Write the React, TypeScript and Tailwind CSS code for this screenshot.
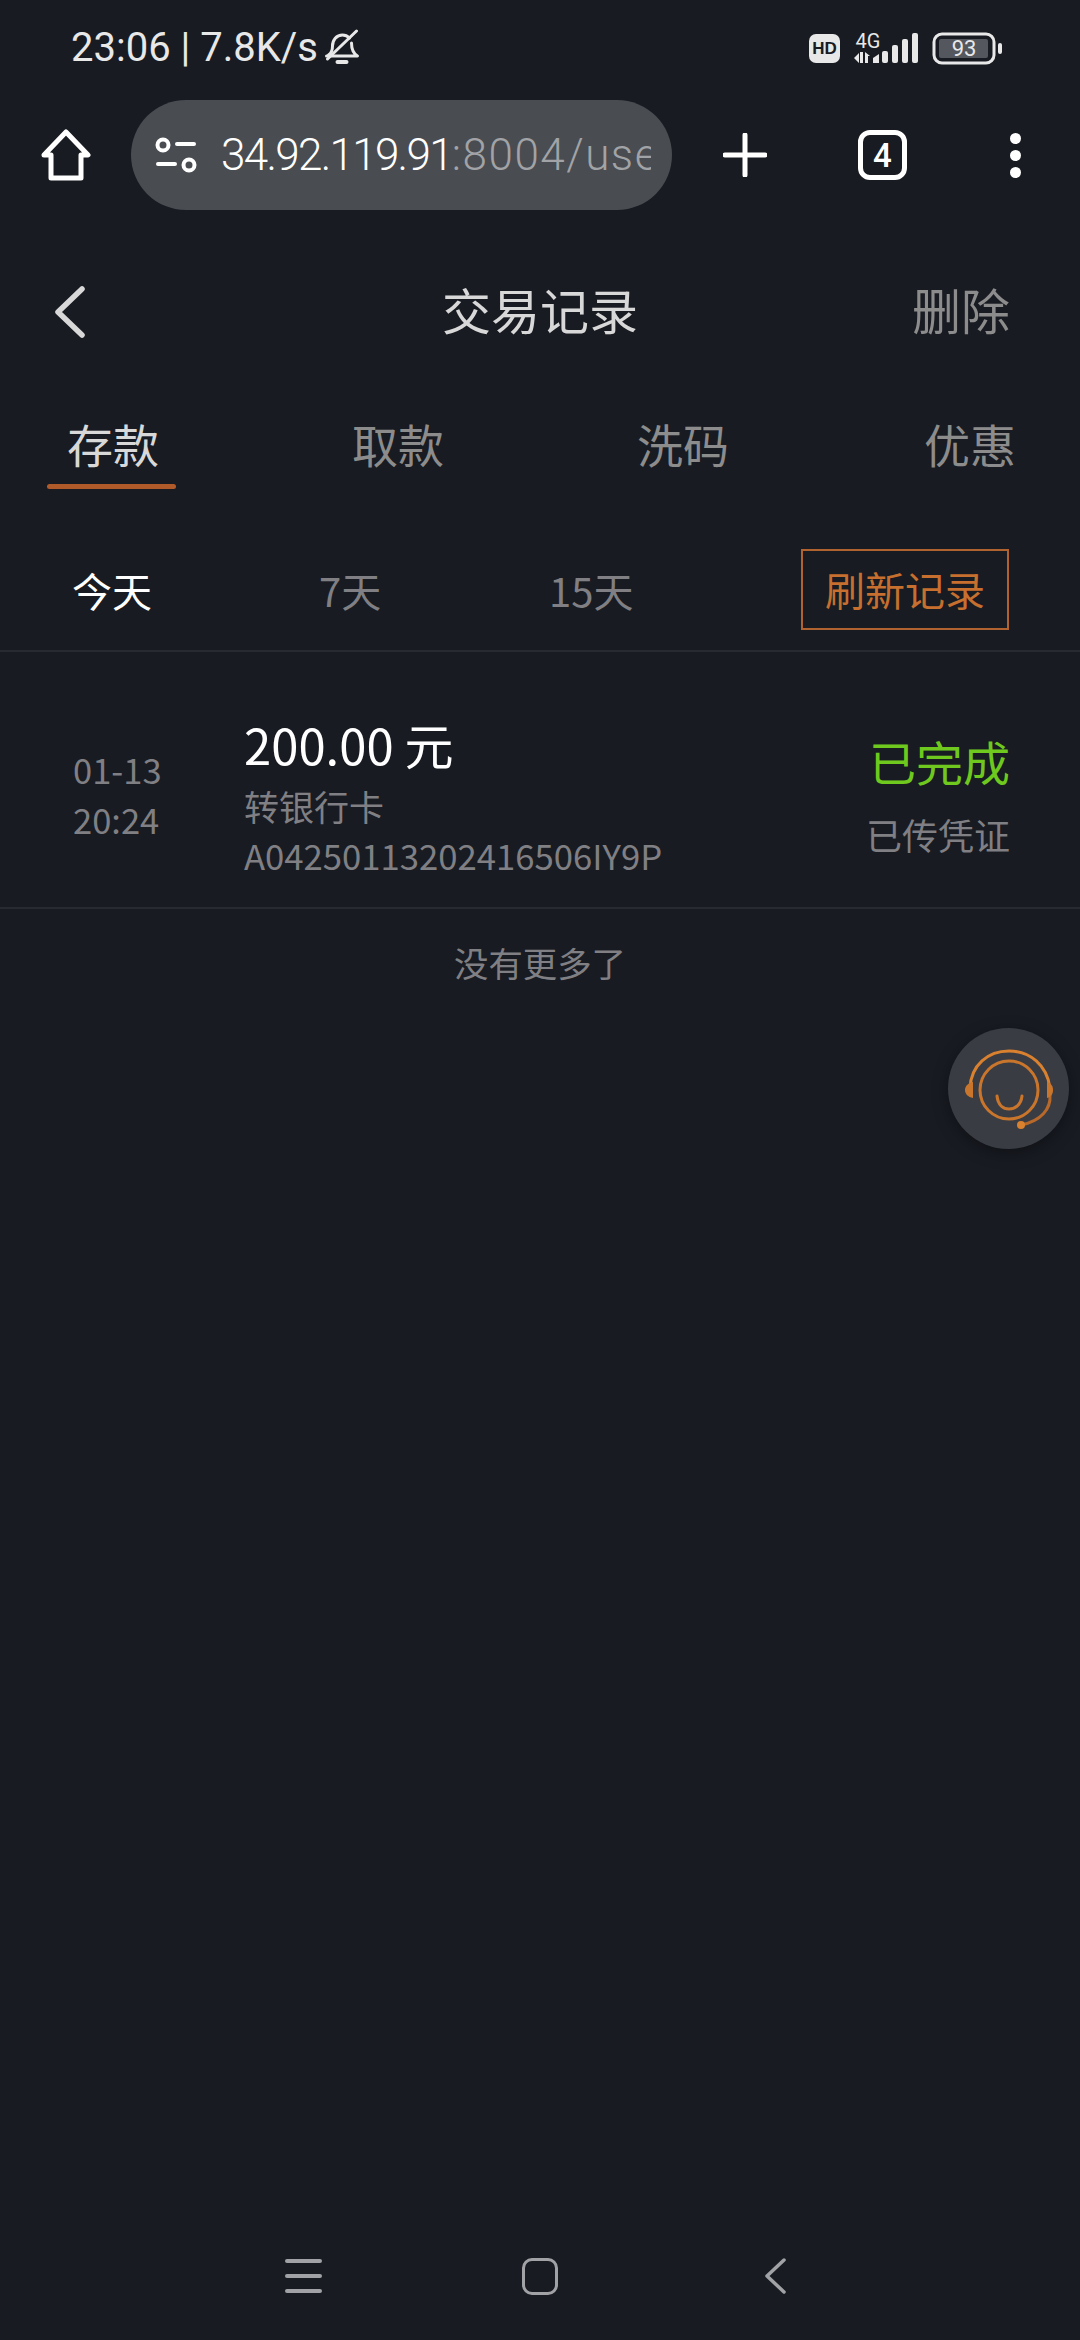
const cjk = "font-['Noto_Sans_CJK_SC','Noto_Sans',sans-serif]";

function BellOff() {
  return (
    <svg width="37" height="38" viewBox="0 0 36 38" fill="none" stroke="#e8e8e8" strokeWidth="3" strokeLinecap="round" strokeLinejoin="round">
      <path d="M5 26c3-2 4-5 4-9 0-6 4-11 10-11 3 0 5 1 7 3" />
      <path d="M28 14c0 6 1 10 6 13H3" />
      <path d="M33 2 4 30" />
      <path d="M14 33h9" strokeWidth="4" />
    </svg>
  );
}

function StatusIcons() {
  return (
    <svg width="194" height="34" viewBox="0 0 194 34" className="text-[#e8e8e8]">
      <rect x="1" y="3" width="31" height="29" rx="7" fill="currentColor" />
      <text x="16.5" y="23" textAnchor="middle" fontFamily="Liberation Sans" fontWeight="700" fontSize="17" fill="#181b22">HD</text>
      <text x="60" y="17" textAnchor="middle" fontFamily="Roboto" fontSize="20" fill="currentColor">4G</text>
      <path d="M46 27l5-5v10zM52 21h3v11h-3zM57 21l5 4h-2v7h-3z" fill="currentColor" />
      <path d="M65 27l6-4v9h-6z" fill="currentColor" />
      <rect x="74" y="20" width="6" height="12" rx="2" fill="currentColor" />
      <rect x="84" y="14" width="6" height="18" rx="2" fill="currentColor" />
      <rect x="94" y="8" width="6" height="24" rx="2" fill="currentColor" />
      <rect x="104" y="2" width="6" height="30" rx="2" fill="currentColor" />
      <rect x="126" y="3" width="60" height="29" rx="8" fill="none" stroke="currentColor" strokeWidth="3" />
      <rect x="131" y="8" width="49" height="19" rx="2" fill="#54575d" />
      <text x="156" y="25" textAnchor="middle" fontFamily="Roboto" fontSize="22" fill="currentColor">93</text>
      <rect x="190" y="12" width="4" height="11" rx="2" fill="currentColor" />
    </svg>
  );
}

function HomeIcon() {
  return (
    <svg width="50" height="52" viewBox="0 0 50 52" fill="none" stroke="#fff" strokeWidth="5" strokeLinejoin="round" strokeLinecap="round">
      <path d="M3 26 25 3l22 23h-7v23H10V26z" />
    </svg>
  );
}

function SiteIcon() {
  return (
    <svg width="42" height="36" viewBox="0 0 42 36" fill="none" stroke="#fff" strokeWidth="4" strokeLinecap="round">
      <circle cx="8" cy="8" r="5.5" />
      <path d="M22 7h17" />
      <path d="M3 27h17" />
      <circle cx="34" cy="28" r="5.5" />
    </svg>
  );
}

function Toolbar() {
  return (
    <div className="flex items-center h-[110px] mt-[6px]">
      <div className="w-[131px] flex justify-center"><HomeIcon /></div>
      <div className="w-[541px] h-[110px] rounded-[55px] bg-[#494c51] flex items-center pl-[24px] pr-[21px]">
        <SiteIcon />
        <div className="ml-[24px] flex-1 overflow-hidden whitespace-nowrap text-[44px] leading-none tracking-[-1.7px] font-['Roboto',sans-serif] font-light text-white">
          34.92.119.91<span className="tracking-[1.5px] text-[#a1a3a6]">:8004/user/record</span>
        </div>
      </div>
      <div className="flex-1 flex items-center pl-[51px] pr-[59px]">
        <svg width="44" height="44" viewBox="0 0 44 44" stroke="#fff" strokeWidth="5" strokeLinecap="round">
          <path d="M22 2v40M2 22h40" />
        </svg>
        <div className="ml-[91px] w-[49px] h-[50px] rounded-[12px] border-[5px] border-white flex items-center justify-center text-[33px] font-medium leading-none font-['Roboto',sans-serif] text-white">4</div>
        <div className="ml-auto flex flex-col gap-[6px]">
          <span className="w-[11px] h-[11px] rounded-full bg-white" />
          <span className="w-[11px] h-[11px] rounded-full bg-white" />
          <span className="w-[11px] h-[11px] rounded-full bg-white" />
        </div>
      </div>
    </div>
  );
}

function Row() {
  return (
    <div className="flex h-[257px] border-b-2 border-[#272a31] pl-[73px] pr-[70px]">
      <div className="w-[171px] pt-[92px] text-[34.5px] leading-[50px] text-[#808084]">
        <div>01-13</div>
        <div>20:24</div>
      </div>
      <div className="flex-1 pt-[55px]">
        <div className="text-[49px] leading-[74px] text-white">200.00 元</div>
        <div className="text-[35px] leading-[50px] text-[#808084]">转银行卡</div>
        <div className="text-[34.7px] leading-[50px] -mt-[1px] text-[#808084]">A04250113202416506IY9P</div>
      </div>
      <div className="flex flex-col items-end pt-[76px]">
        <div className="text-[47px] leading-[66px] text-[#6fc81e]">已完成</div>
        <div className="mt-[15px] text-[36px] leading-[50px] text-[#808084]">已传凭证</div>
      </div>
    </div>
  );
}

function Agent() {
  return (
    <svg width="88" height="80" viewBox="0 0 88 80" fill="none" stroke="#d9812f" strokeWidth="3" strokeLinecap="round">
      <path d="M5 39C6 16 23 2 44 2s38 14 41 37" />
      <path d="M85 46c1 14-9 26-29 30" stroke="#b8692a" />
      <circle cx="44" cy="41" r="29" stroke="#c9762c" />
      <path d="M32 47c1 9 6 13 12 13s12-4 13-13" stroke="#c9762c" />
      <path d="M8 33c-5 1-8 4-8 8s3 7 8 8z" fill="#c9762c" stroke="none" />
      <path d="M82 33c4 1 6 4 6 8s-2 7-6 8z" fill="#c9762c" stroke="none" />
      <circle cx="56" cy="76" r="4" fill="#d9812f" stroke="none" />
    </svg>
  );
}

export default function App() {
  return (
    <div className={`relative w-[1080px] h-[2340px] overflow-hidden flex flex-col bg-[#181b22] ${cjk}`}>
      {/* system status bar */}
      <div className="flex items-center justify-between h-[94px] pt-[2px] pl-[71px] pr-[78px]">
        <div className="flex items-center gap-[5px] text-[40px] leading-none text-[#e8e8e8] font-['Roboto',sans-serif]">
          <span>23:06 | 7.8K/s</span>
          <BellOff />
        </div>
        <StatusIcons />
      </div>

      <Toolbar />

      {/* page title */}
      <div className="relative flex items-center justify-between h-[140px] mt-[28px] pl-[54px] pr-[70px]">
        <svg className="mt-[8px]" width="32" height="52" viewBox="0 0 32 52" fill="none" stroke="#d8d8d8" strokeWidth="5.5" strokeLinecap="round" strokeLinejoin="round">
          <path d="M28 3 4 26l24 23" />
        </svg>
        <div className="absolute left-0 right-0 text-center text-[49px] leading-none text-[#d8d8d8]">交易记录</div>
        <div className="text-[49px] leading-none text-[#8c8c8c]">删除</div>
      </div>

      {/* record type tabs */}
      <div className="flex items-start h-[124px] mt-[32px] pl-[47px]">
        <div className="flex flex-col items-center w-[129px]">
          <div className="pl-[3px] text-[46px] leading-[66px] text-[#d8d8d8]">存款</div>
          <div className="w-full h-[5px] rounded-full bg-[#b05a2a] mt-[8px]" />
        </div>
        <div className="text-[46px] leading-[66px] text-[#8c8c8c] ml-[176px]">取款</div>
        <div className="text-[46px] leading-[66px] text-[#8c8c8c] ml-[193px]">洗码</div>
        <div className="text-[46px] leading-[66px] text-[#8c8c8c] ml-[195px]">优惠</div>
      </div>

      {/* date range filters */}
      <div className="flex items-center h-[118px] pl-[72px] pr-[71px] pb-[4px] border-b-2 border-[#272a31]">
        <div className="w-[247px] text-[40px] text-white">今天</div>
        <div className="w-[230px] text-[40px] text-[#808084]">7天</div>
        <div className="flex-1 text-[40px] text-[#808084]">15天</div>
        <div className="w-[208px] h-[81px] border-2 border-[#b0632f] flex items-center justify-center text-[40px] text-[#c66f2e] -mt-[2px]">刷新记录</div>
      </div>

      <Row />

      <div className="h-[108px] flex items-center justify-center text-[34.4px] text-[#808084]">没有更多了</div>

      {/* floating support button */}
      <div className="absolute left-[948px] top-[1028px] w-[121px] h-[121px] rounded-full bg-[#3a3c44] shadow-[0_4px_16px_rgba(0,0,0,0.35)] flex items-center justify-center">
        <Agent />
      </div>

      {/* system navigation bar */}
      <div className="mt-auto h-[128px] pl-[285px] flex items-center text-[#a0a2a6]">
        <div className="w-[37px] flex flex-col gap-[11px]">
          <span className="h-[4px] rounded-full bg-current" />
          <span className="h-[4px] rounded-full bg-current" />
          <span className="h-[4px] rounded-full bg-current" />
        </div>
        <div className="ml-[200px] w-[36px] h-[37px] rounded-[10px] border-[3.5px] border-current" />
        <svg className="ml-[206px]" width="22" height="36" viewBox="0 0 22 36" fill="none" stroke="currentColor" strokeWidth="3.5" strokeLinecap="round" strokeLinejoin="round">
          <path d="M20 2 3 18l17 16" />
        </svg>
      </div>
    </div>
  );
}
